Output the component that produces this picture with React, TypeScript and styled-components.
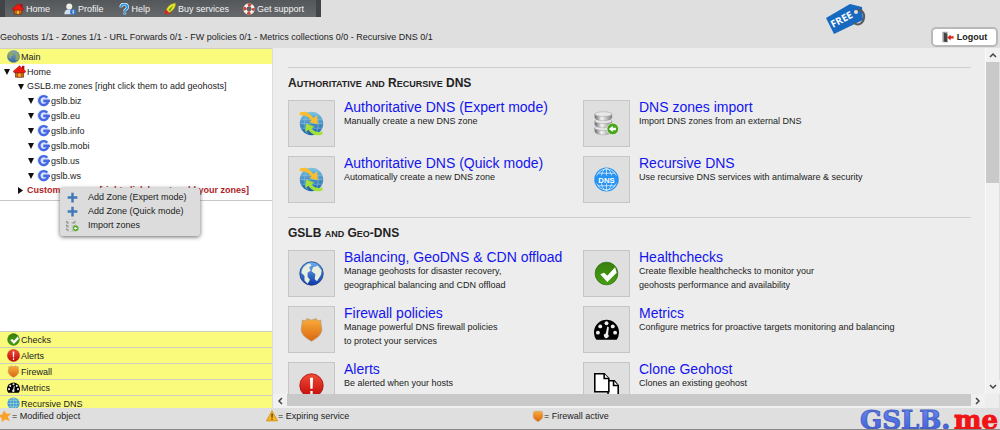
import React from 'react';
import styled, { createGlobalStyle } from 'styled-components';

const Global = createGlobalStyle`
  * { box-sizing: border-box; }
  body { margin: 0; background: #dfdfdf; color: #222; font-family: "Liberation Sans", Arial, sans-serif; font-size: 9px; }
`;

const Page = styled.div`
  display: flex;
  flex-direction: column;
  height: 100vh;
  overflow: hidden;
`;
const Header = styled.header`
  display: flex;
  justify-content: space-between;
  height: 48px;
  flex: none;
`;
const MenuBar = styled.nav`
  display: flex;
  align-items: center;
  width: 321px;
  height: 17px;
  padding: 0 7px;
  background: linear-gradient(#54575a, #66696c);
  border: solid #424448;
  border-width: 0 5px;
`;
const MenuLink = styled.a`
  display: flex;
  align-items: center;
  gap: 2px;
  margin-right: 14px;
  color: #f4f4f4;
  line-height: 16px;
  text-decoration: none;
  white-space: nowrap;
`;
const Stats = styled.p`
  margin: 0;
  padding-top: 13px;
  line-height: 15px;
  white-space: nowrap;
`;
const HeaderRight = styled.div`
  display: flex;
  align-items: flex-end;
  justify-content: space-between;
  width: 175px;
  padding: 0 2px 1px 0;
`;
const TagSvg = styled.svg`
  align-self: flex-start;
`;
const Logout = styled.button`
  display: flex;
  align-items: center;
  justify-content: center;
  gap: 3px;
  width: 67px;
  height: 20px;
  padding: 0;
  border: 2px solid #b9b9b9;
  border-radius: 5px;
  background: #fff;
  color: #222;
  font: bold 9px "Liberation Sans", Arial, sans-serif;
`;
const Body = styled.div`
  display: flex;
  flex: 1;
  min-height: 0;
`;
const Sidebar = styled.aside`
  display: flex;
  flex-direction: column;
  width: 273px;
  flex: none;
  background: #fff;
  border-right: 1px solid #dcdcdc;
`;
const PanelTitle = styled.button`
  display: flex;
  align-items: center;
  gap: 1px;
  width: 100%;
  height: 16px;
  flex: none;
  padding: 0 0 0 7px;
  border: 0;
  border-top: 1px solid #cfcfc0;
  background: #fafa7d;
  color: #222;
  font: 9px "Liberation Sans", Arial, sans-serif;
`;
const Tree = styled.ul`
  position: relative;
  margin: 0;
  padding: 0 0 3px;
  list-style: none;
  border-bottom: 1px solid #c8c8c8;
`;
const indents = [4, 18, 28];
const Node = styled.li<{ $level: number; $short?: boolean; $alert?: boolean }>`
  display: flex;
  align-items: center;
  gap: 1px;
  height: ${p => (p.$short ? 14 : 15)}px;
  padding-left: ${p => indents[p.$level]}px;
  color: ${p => (p.$alert ? '#b01c24' : '#222')};
  font-weight: ${p => (p.$alert ? 'bold' : 'normal')};
  white-space: nowrap;
`;
const TwistySvg = styled.svg`
  margin-right: 2px;
`;
const ContextMenu = styled.div`
  position: absolute;
  top: 124px;
  left: 60px;
  width: 140px;
  padding: 2px 0 4px;
  border-radius: 3px;
  background: #dcdcdc;
  box-shadow: 0 1px 4px #666;
`;
const MenuItem = styled.button`
  display: grid;
  grid-template-columns: 22px 1fr;
  align-items: center;
  width: 100%;
  height: 14px;
  padding: 0 0 0 6px;
  border: 0;
  background: none;
  color: #222;
  font: 9px "Liberation Sans", Arial, sans-serif;
  text-align: left;
`;
const Panels = styled.div`
  max-height: 77px;
  margin-top: auto;
  overflow: hidden;
`;
const Main = styled.main`
  display: grid;
  grid-template: minmax(0, 1fr) 14px / minmax(0, 1fr) 14px;
  flex: 1;
  min-width: 0;
  margin-right: 1px;
  background: #ededed;
`;
const Content = styled.div`
  padding: 19px 14px 0 15px;
  overflow: hidden;
`;
const Section = styled.section`
  padding-bottom: 15px;
  border-top: 1px solid #cfcfcf;
`;
const Heading = styled.h2`
  margin: 0;
  padding: 7px 0 9px;
  font-size: 12px;
  line-height: 16px;
`;
const SmallCaps = styled.span`
  font-size: 9px;
  line-height: 9px;
  text-transform: uppercase;
`;
const Cards = styled.div`
  display: grid;
  grid-template-columns: 295px 1fr;
  row-gap: 10px;
`;
const Card = styled.div`
  display: flex;
  gap: 9px;
  height: 46px;
`;
const IconBox = styled.span`
  display: flex;
  align-items: center;
  justify-content: center;
  width: 47px;
  height: 47px;
  flex: none;
  border: 1px solid #c6c6c6;
  background: #dfdfdf;
`;
const CardTitle = styled.a`
  display: block;
  color: #1414ee;
  font-size: 14px;
  line-height: 14px;
  text-decoration: none;
  white-space: nowrap;
`;
const CardText = styled.p`
  margin: 0;
  line-height: 14px;
  white-space: pre;
`;
const VBar = styled.div`
  display: flex;
  flex-direction: column;
  background: #f1f1f1;
  border-left: 1px solid #fafafa;
`;
const HBar = styled.div`
  display: flex;
  grid-column: 1;
  background: #f1f1f1;
`;
const Arrow = styled.button`
  display: flex;
  align-items: center;
  justify-content: center;
  width: 14px;
  height: 14px;
  flex: none;
  padding: 0;
  border: 0;
  background: #f1f1f1;
`;
const VTrack = styled.div`
  flex: 1;
`;
const VThumb = styled.div`
  height: 38%;
  background: #c9c9c9;
`;
const HThumb = styled.div`
  flex: 1;
  height: 12px;
  background: #c9c9c9;
`;
const Footer = styled.footer`
  display: grid;
  grid-template-columns: 266px 266px 1fr auto;
  height: 22px;
  flex: none;
  border-bottom: 1px solid #888;
  overflow: hidden;
`;
const Legend = styled.span`
  display: flex;
  align-items: center;
  height: 16px;
  white-space: nowrap;
`;

type IconName = 'home' | 'user' | 'help' | 'buy' | 'ring' | 'earth' | 'globe' | 'g' | 'plus' | 'db' | 'check' | 'alert' | 'shield' | 'gauge' | 'dns' | 'grid' | 'sync' | 'clone' | 'star' | 'warn' | 'door';

const lg = (id: string, a: string, b: string) => (
  <linearGradient id={id} x1="0" y1="0" x2="0" y2="1"><stop stopColor={a} /><stop offset="1" stopColor={b} /></linearGradient>
);

const drawings: Record<IconName, React.ReactNode> = {
  home: <><path d="M6 14v16h20V14l-10-9z" fill="#d8690f" stroke="#5b1c00" strokeWidth="1.5" /><path d="M22 2h6v10h-6z" fill="#b01010" /><path d="M0 16 16 2l16 14-3 3-26 0z" fill="#ee1b12" stroke="#700" /><path d="M12 20h8v10h-8z" fill="#f5b72c" stroke="#622" /></>,
  user: <><circle cx="14" cy="9" r="8" fill="#efefe8" /><path d="M1 30c0-10 4-13 12-13s12 3 12 13z" fill="#cfe0f2" /><circle cx="24" cy="24" r="8" fill="#3976c8" /><path d="M23 19h3v2h-3zM23 22h3v6h-3z" fill="#fff" /></>,
  help: <><path d="M8 11c0-10 17-10 17 0 0 6-7 6-7 11" fill="none" stroke="#fff" strokeWidth="8" /><path d="M8 11c0-10 17-10 17 0 0 6-7 6-7 11" fill="none" stroke="#2e94e0" strokeWidth="5" /><circle cx="18" cy="28" r="3.500" fill="#2e94e0" stroke="#fff" /></>,
  buy: <><path d="M1 22 9 14l10 9-4 9-4-6-7 5z" fill="#e42020" /><path d="M6 18C10 8 19 1 31 0c1 11-6 20-17 26z" fill="#e8e22c" stroke="#6c7d10" /><path d="M12 18 25 6l-9 15z" fill="#3f9a20" /></>,
  ring: <><circle cx="16" cy="16" r="11" fill="none" stroke="#f3f0ee" strokeWidth="9" /><circle cx="16" cy="16" r="11" fill="none" stroke="#c9483c" strokeWidth="9" strokeDasharray="8.640 8.640" strokeDashoffset="4.320" /></>,
  earth: <>{lg('ea', '#7fa9cf', '#34689f')}<circle cx="16" cy="16" r="15" fill="url(#ea)" stroke="#4a6a88" /><path d="M4 9c3-4 7-6 11-6l3 4-4 2 1 5-5 2-1 6-5-5zM20 6l7 3 3 8-3 7-5 2-2-6 3-5-4-4z" fill="#8fa860" /></>,
  globe: <>{lg('gl', '#6fb2f2', '#0b37a8')}<circle cx="16" cy="16" r="15" fill="url(#gl)" stroke="#1a3c80" /><path d="M4 11c2-4 6-7 10-8l2 3-3 2 2 4-4 3 0 5 3 4-3 5-4-4 0-6-4-4zM18 8l6-2 5 6-1 6-5 8-3-3 1-6-5-4z" fill="#e9efdf" /></>,
  g: <><circle cx="15" cy="16" r="15" fill="#b9c8fa" opacity=".5" /><path d="M25 9A11 11 0 1 0 26 22V17H16" fill="none" stroke="#4368e4" strokeWidth="6" /><path d="M16 14h16v6H16z" fill="#4368e4" /></>,
  plus: <path d="M13 4h6v9h9v6h-9v9h-6v-9H4v-6h9z" fill="#3f78b8" />,
  db: <><linearGradient id="dbg"><stop stopColor="#666" /><stop offset=".4" stopColor="#f4f4f4" /><stop offset="1" stopColor="#808080" /></linearGradient>{[22, 13, 4].map(y => <g key={y}><path d={`M1 ${y}v4c0 6 22 6 22 0v-4z`} fill="url(#dbg)" stroke="#8a8a8a" strokeWidth=".5" /><ellipse cx="12" cy={y} rx="11" ry="3" fill="#e8e8e8" stroke="#8a8a8a" strokeWidth=".5" /></g>)}<circle cx="24" cy="23" r="7.500" fill="#48a41c" stroke="#e8f5df" /><path d="m19 23 5-4v2.500h4v3h-4V27z" fill="#fff" /></>,
  check: <>{lg('ck', '#3a7f10', '#45a012')}<circle cx="16" cy="16" r="14.500" fill="url(#ck)" stroke="#2c6e0a" /><path d="m8 17 5-2 4 4L27 8l2 7-12 12z" fill="#fff" /></>,
  alert: <>{lg('al', '#f34a38', '#c00a08')}<circle cx="16" cy="16" r="15" fill="url(#al)" stroke="#a51512" /><path d="M14 6h4l-.6 14h-2.800zM14.500 23h3v4h-3z" fill="#fff" /></>,
  shield: <>{lg('sh', '#f9ad3c', '#d9660e')}<path d="M4 4l4 1 2-3 6 2 6-2 2 3 4-1c-1 5 2 8 1 14-2 7-8 10-13 13C11 28 5 25 3 18 2 12 5 9 4 4z" fill="url(#sh)" stroke="#b89a78" /></>,
  gauge: <><path d="M3 29a16 16 0 1 1 26 0z" fill="#000" /><g fill="#ededed"><circle cx="5" cy="20" r="2.500" /><circle cx="8" cy="12" r="2.500" /><circle cx="16" cy="8" r="2.500" /><circle cx="24" cy="12" r="2.500" /><circle cx="27" cy="20" r="2.500" /><path d="m17 12 2 1-1 9a3 3 0 1 1-3-1z" /></g></>,
  dns: <><circle cx="16" cy="16" r="15.500" fill="#2594f2" /><g fill="none" stroke="#e4eefa" strokeWidth="1"><circle cx="16" cy="16" r="13.500" /><ellipse cx="16" cy="16" rx="7" ry="14" /><path d="M16 2v28M5 8h22M5 24h22" /></g><path d="M1 11h30v10H1z" fill="#2594f2" /><text x="16" y="20" textAnchor="middle" fontSize="10" fontWeight="bold" fill="#fff">DNS</text></>,
  grid: <><circle cx="16" cy="16" r="15" fill="#3d9be6" /><g fill="none" stroke="#b4dcb8" strokeWidth="1.500"><ellipse cx="16" cy="16" rx="7" ry="14" /><path d="M16 2v28M4 8h24M2 16h28M4 24h24" /></g></>,
  sync: <>{lg('sy', '#7cc4e2', '#1a5ea6')}<circle cx="16" cy="16" r="15" fill="url(#sy)" /><path d="M3 11h26M2 16h28M3 22h26M11 2c-5 9-5 19 0 28M21 2c5 9 5 19 0 28" stroke="#8cc8e6" strokeWidth=".7" fill="none" /><path d="M1 2c7-3 13 0 17 7l5-3 1 11-11-3 3-2C12 8 8 4 1 6z" fill="#fbbd2c" /><path d="M30 30c-8 3-14 0-18-6l-4 3 1-11 11 4-4 2c3 4 7 6 14 4z" fill="#a5e03a" /></>,
  clone: <g fill="#fff" stroke="#000" strokeWidth="2"><path d="M18 10h8l5 6v15H18z" /><path d="M25 10v6h6" /><path d="M1 1h12l6 6v17H1z" /><path d="M13 1v6h6" /></g>,
  star: <path d="m11 1 6 9 13-1-9 9 5 11-12-4-9 7-1-11-9-6 11-4z" fill="#f8a22c" />,
  warn: <><path d="M16 2 31 29H1z" fill="#f7b31f" stroke="#cf8d12" strokeWidth="2" /><path d="M14.500 10h3.500l-1 11h-2zM14.500 23h3v3h-3z" fill="#222" /></>,
  door: <><path d="M1 2h14v28H1z" fill="#a5a5a5" /><path d="m5 4 9 3v23l-9-2z" fill="#444" /><path d="m14 17 9-8v5h8v6h-8v5z" fill="#d8231f" /></>,
};

const Icon = ({ name, size = 12 }: { name: IconName; size?: number }) => (
  <svg width={size} height={size} viewBox="0 0 32 32" aria-hidden="true">{drawings[name]}</svg>
);

const Twisty = ({ closed = false }: { closed?: boolean }) => (
  <TwistySvg width="6" height="7" viewBox="0 0 6 7" aria-hidden="true"><path d={closed ? 'M0 0v7l5-3.500z' : 'M0 1h6L3 7z'} fill="#111" /></TwistySvg>
);
const Chevron = ({ d }: { d: string }) => (
  <svg width="8" height="8" viewBox="0 0 8 8" aria-hidden="true"><path d={d} fill="none" stroke="#444" strokeWidth="1.500" /></svg>
);
const FreeTag = () => (
  <TagSvg width="42" height="36" viewBox="0 0 42 36" role="img" aria-label="Free">
    <path d="M1 18 25 4l12 3 1 13L9 34z" fill="#1769c0" />
    <path d="M30 11c5-3 10 1 9 7s-6 8-10 5" fill="none" stroke="#5a5a5a" strokeWidth="2" />
    <circle cx="31" cy="12" r="2" fill="#dfdfdf" />
    <text x="8" y="28" transform="rotate(-28 8 28)" fontSize="10" fontWeight="bold" fontFamily="Open Sans, sans-serif" fill="#fff">FREE</text>
  </TagSvg>
);
const Logo = () => (
  <svg width="141" height="22" viewBox="0 0 141 22" role="img" aria-label="GSLB.me">
    {lg('lo', '#6d8cf2', '#3a5ad6')}
    <g fontFamily="DejaVu Serif, serif" fontWeight="bold" fontSize="26">
      <text x="1" y="21" fill="url(#lo)" stroke="#4560c0">GSLB.</text>
      <text x="95" y="21" fill="#f01414" stroke="#f01414">me</text>
    </g>
  </svg>
);

const links: [IconName, string][] = [['home', 'Home'], ['user', 'Profile'], ['help', 'Help'], ['buy', 'Buy services'], ['ring', 'Get support']];
const zones = ['gslb.biz', 'gslb.eu', 'gslb.info', 'gslb.mobi', 'gslb.us', 'gslb.ws'];
const panels: [IconName, string][] = [['check', 'Checks'], ['alert', 'Alerts'], ['shield', 'Firewall'], ['gauge', 'Metrics'], ['grid', 'Recursive DNS']];
const sections: { title: string; cards: [IconName, string, string][] }[] = [
  { title: 'Authoritative and Recursive DNS', cards: [
    ['sync', 'Authoritative DNS (Expert mode)', 'Manually create a new DNS zone'],
    ['db', 'DNS zones import', 'Import DNS zones from an external DNS'],
    ['sync', 'Authoritative DNS (Quick mode)', 'Automatically create a new DNS zone'],
    ['dns', 'Recursive DNS', 'Use recursive DNS services with antimalware & security'],
  ] },
  { title: 'GSLB and Geo-DNS', cards: [
    ['globe', 'Balancing, GeoDNS & CDN offload', 'Manage geohosts for disaster recovery,\ngeographical balancing and CDN offload'],
    ['check', 'Healthchecks', 'Create flexible healthchecks to monitor your\ngeohosts performance and availability'],
    ['shield', 'Firewall policies', 'Manage powerful DNS firewall policies\nto protect your services'],
    ['gauge', 'Metrics', 'Configure metrics for proactive targets monitoring and balancing'],
    ['alert', 'Alerts', 'Be alerted when your hosts'],
    ['clone', 'Clone Geohost', 'Clones an existing geohost'],
  ] },
];

const SectionHeading = ({ text }: { text: string }) => (
  <Heading>
    {text.split(/([a-z]+)/).map((part, i) => (i % 2 ? <SmallCaps key={i}>{part}</SmallCaps> : part))}
  </Heading>
);

export default function App() {
  return (
    <Page>
      <Global />
      <Header>
        <div>
          <MenuBar>{links.map(([i, t]) => <MenuLink href="#" key={t}><Icon name={i} />{t}</MenuLink>)}</MenuBar>
          <Stats>Geohosts 1/1 - Zones 1/1 - URL Forwards 0/1 - FW policies 0/1 - Metrics collections 0/0 - Recursive DNS 0/1</Stats>
        </div>
        <HeaderRight><FreeTag /><Logout><Icon name="door" />Logout</Logout></HeaderRight>
      </Header>
      <Body>
        <Sidebar>
          <PanelTitle><Icon name="earth" size={13} />Main</PanelTitle>
          <Tree>
            <Node $level={0}><Twisty /><Icon name="home" size={13} />Home</Node>
            <Node $level={1} $short><Twisty />GSLB.me zones [right click them to add geohosts]</Node>
            {zones.map(z => <Node $level={2} key={z}><Twisty /><Icon name="g" size={13} />{z}</Node>)}
            <Node $level={1} $short $alert><Twisty closed />Customer zones [right click here to add your zones]</Node>
            <ContextMenu>
              <MenuItem><Icon name="plus" size={13} />Add Zone (Expert mode)</MenuItem>
              <MenuItem><Icon name="plus" size={13} />Add Zone (Quick mode)</MenuItem>
              <MenuItem><Icon name="db" size={13} />Import zones</MenuItem>
            </ContextMenu>
          </Tree>
          <Panels>{panels.map(([i, t]) => <PanelTitle key={t}><Icon name={i} size={13} />{t}</PanelTitle>)}</Panels>
        </Sidebar>
        <Main>
          <Content>
            {sections.map(s => (
              <Section key={s.title}>
                <SectionHeading text={s.title} />
                <Cards>{s.cards.map(([i, t, d]) => (
                  <Card key={t}><IconBox><Icon name={i} size={25} /></IconBox><div><CardTitle href="#">{t}</CardTitle><CardText>{d}</CardText></div></Card>
                ))}</Cards>
              </Section>
            ))}
          </Content>
          <VBar><Arrow aria-label="Up"><Chevron d="M1 6l3-3 3 3" /></Arrow><VTrack><VThumb /></VTrack><Arrow aria-label="Down"><Chevron d="M1 2l3 3 3-3" /></Arrow></VBar>
          <HBar><Arrow aria-label="Left"><Chevron d="M6 1 3 4l3 3" /></Arrow><HThumb /><Arrow aria-label="Right"><Chevron d="M2 1l3 3-3 3" /></Arrow></HBar>
        </Main>
      </Body>
      <Footer>
        <Legend><Icon name="star" />= Modified object</Legend>
        <Legend><Icon name="warn" />= Expiring service</Legend>
        <Legend><Icon name="shield" />= Firewall active</Legend>
        <Logo />
      </Footer>
    </Page>
  );
}
